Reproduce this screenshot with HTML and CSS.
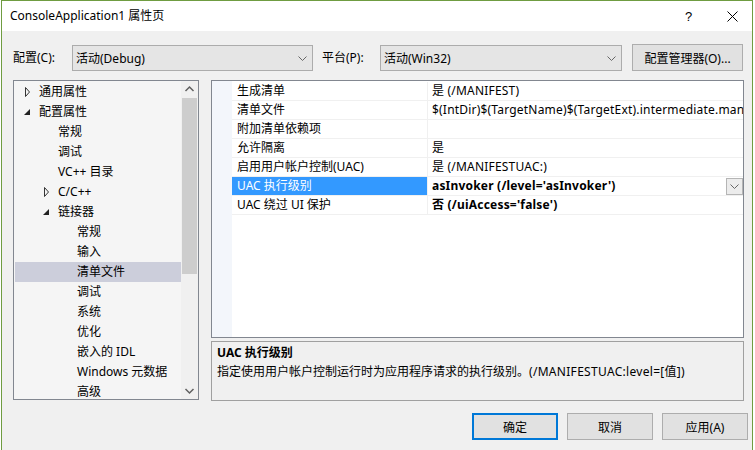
FILE: index.html
```html
<!DOCTYPE html>
<html lang="zh-CN">
<head>
<meta charset="utf-8">
<title>ConsoleApplication1 属性页</title>
<link rel="stylesheet" href="styles.css">
</head>
<body>
<div class="window">
  <div class="titlebar">
    <span class="title">ConsoleApplication1 属性页</span>
    <span class="help">?</span>
    <svg class="close" width="11" height="11" viewBox="0 0 11 11"><path d="M0.5 0.5 L10.5 10.5 M10.5 0.5 L0.5 10.5" stroke="#000" stroke-width="1" fill="none"/></svg>
  </div>
  <div class="content">
    <div class="config-row">
      <span class="lbl lbl-config">配置(C):</span>
      <div class="combo combo-config"><span class="combo-text">活动(Debug)</span><svg class="chev" width="9" height="5" viewBox="0 0 9 5"><path d="M0.5 0.5 L4.5 4.5 L8.5 0.5" stroke="#666" fill="none"/></svg></div>
      <span class="lbl lbl-platform">平台(P):</span>
      <div class="combo combo-platform"><span class="combo-text">活动(Win32)</span><svg class="chev" width="9" height="5" viewBox="0 0 9 5"><path d="M0.5 0.5 L4.5 4.5 L8.5 0.5" stroke="#666" fill="none"/></svg></div>
      <button class="btn btn-mgr">配置管理器(O)...</button>
    </div>
    <div class="main">
      <div class="tree">
        <ul class="tree-list">
          <li class="node l0"><span class="tw"><svg width="16" height="20" viewBox="0 0 16 20"><path d="M2.5 5.5 L6.5 10 L2.5 14.5 Z" stroke="#333" fill="none"/></svg></span>通用属性</li>
          <li class="node l0"><span class="tw"><svg width="16" height="20" viewBox="0 0 16 20"><path d="M7 7 L7 13 L1 13 Z" fill="#222"/></svg></span>配置属性</li>
          <li class="node l1"><span class="tw"></span>常规</li>
          <li class="node l1"><span class="tw"></span>调试</li>
          <li class="node l1"><span class="tw"></span>VC++ 目录</li>
          <li class="node l1"><span class="tw"><svg width="16" height="20" viewBox="0 0 16 20"><path d="M2.5 5.5 L6.5 10 L2.5 14.5 Z" stroke="#333" fill="none"/></svg></span>C/C++</li>
          <li class="node l1"><span class="tw"><svg width="16" height="20" viewBox="0 0 16 20"><path d="M7 7 L7 13 L1 13 Z" fill="#222"/></svg></span>链接器</li>
          <li class="node l2"><span class="tw"></span>常规</li>
          <li class="node l2"><span class="tw"></span>输入</li>
          <li class="node l2 selected"><span class="tw"></span>清单文件</li>
          <li class="node l2"><span class="tw"></span>调试</li>
          <li class="node l2"><span class="tw"></span>系统</li>
          <li class="node l2"><span class="tw"></span>优化</li>
          <li class="node l2"><span class="tw"></span>嵌入的 IDL</li>
          <li class="node l2"><span class="tw"></span>Windows 元数据</li>
          <li class="node l2"><span class="tw"></span>高级</li>
        </ul>
        <div class="vscroll">
          <div class="sb-btn"><svg width="17" height="17" viewBox="0 0 17 17"><path d="M4.5 10 L8.5 6 L12.5 10" stroke="#606060" stroke-width="1.5" fill="none"/></svg></div>
          <div class="sb-track"><div class="sb-thumb"></div></div>
          <div class="sb-btn"><svg width="17" height="17" viewBox="0 0 17 17"><path d="M4.5 7 L8.5 11 L12.5 7" stroke="#606060" stroke-width="1.5" fill="none"/></svg></div>
        </div>
      </div>
      <div class="right">
        <div class="grid">
          <div class="prow"><div class="pmargin"></div><div class="pname">生成清单</div><div class="pval">是 (/MANIFEST)</div></div>
          <div class="prow"><div class="pmargin"></div><div class="pname">清单文件</div><div class="pval">$(IntDir)$(TargetName)$(TargetExt).intermediate.manifest</div></div>
          <div class="prow"><div class="pmargin"></div><div class="pname">附加清单依赖项</div><div class="pval"></div></div>
          <div class="prow"><div class="pmargin"></div><div class="pname">允许隔离</div><div class="pval">是</div></div>
          <div class="prow"><div class="pmargin"></div><div class="pname">启用用户帐户控制(UAC)</div><div class="pval">是 (/MANIFESTUAC:)</div></div>
          <div class="prow active"><div class="pmargin"></div><div class="pname">UAC 执行级别</div><div class="pval bold"><span class="pval-text">asInvoker (/level='asInvoker')</span><span class="dd"><svg width="9" height="5" viewBox="0 0 9 5"><path d="M0.5 0.5 L4.5 4.5 L8.5 0.5" stroke="#666" fill="none"/></svg></span></div></div>
          <div class="prow"><div class="pmargin"></div><div class="pname">UAC 绕过 UI 保护</div><div class="pval bold">否 (/uiAccess='false')</div></div>
        </div>
        <div class="desc">
          <div class="desc-title">UAC 执行级别</div>
          <div class="desc-text">指定使用用户帐户控制运行时为应用程序请求的执行级别。<span class="latin">(/MANIFESTUAC:level=[值])</span></div>
        </div>
      </div>
    </div>
    <div class="footer">
      <button class="btn btn-dlg btn-default">确定</button>
      <button class="btn btn-dlg">取消</button>
      <button class="btn btn-dlg">应用(A)</button>
    </div>
  </div>
</div>
</body>
</html>
```

FILE: styles.css
```css
html, body {
  margin: 0;
  padding: 0;
  background: #ffffff;
}
body {
  width: 755px;
  height: 450px;
  overflow: hidden;
}
.window {
  margin-left: 1px;
  width: 750px;
  height: 449px;
  border: 1px solid #6f9c41;
  border-bottom: none;
  background: #f0f0f0;
  font-family: "Noto Sans", "Noto Sans CJK SC", sans-serif;
  font-size: 12px;
  color: #000;
  overflow: hidden;
}
.titlebar {
  height: 30px;
  background: #fff;
  display: flex;
  align-items: center;
  padding-left: 8px;
}
.title {
  line-height: 16px;
}
.help {
  margin-left: auto;
  font-family: "Liberation Sans", sans-serif;
  font-size: 13px;
  width: 8px;
  margin-right: 34px;
}
.close {
  margin-right: 14px;
  display: block;
}
.content {
  padding: 13px 8px 0 11px;
}
.config-row {
  display: flex;
  align-items: flex-end;
  height: 27px;
}
.lbl {
  align-self: center;
  line-height: 16px;
  padding-top: 1px;
}
.lbl-config {
  width: 59px;
}
.lbl-platform {
  width: 58px;
  margin-left: 9px;
}
.combo {
  box-sizing: border-box;
  height: 26px;
  border: 1px solid #acacac;
  background: #e5e5e5;
  display: flex;
  align-items: center;
  padding-left: 3px;
  padding-right: 5px;
}
.combo-config {
  width: 241px;
}
.combo-platform {
  width: 242px;
}
.combo-text {
  flex: 1;
}
.chev {
  display: block;
}
.btn {
  box-sizing: border-box;
  font: inherit;
  color: #000;
  background: #e1e1e1;
  border: 1px solid #adadad;
  padding: 0;
  margin: 0;
}
.btn-mgr {
  width: 111px;
  height: 27px;
  margin-left: 10px;
}
.main {
  display: flex;
  align-items: flex-start;
  gap: 12px;
  margin-top: 9px;
}
.tree {
  box-sizing: border-box;
  width: 186px;
  height: 320px;
  border: 1px solid #828790;
  background: #f5f5f5;
  display: flex;
  overflow: hidden;
}
.tree-list {
  list-style: none;
  margin: 0;
  padding: 1px 0 0 1px;
  width: 166px;
  height: 317px;
  overflow: hidden;
}
.node {
  display: flex;
  height: 20px;
  line-height: 20px;
  white-space: nowrap;
}
.node.l0 { padding-left: 8px; }
.node.l1 { padding-left: 27px; }
.node.l2 { padding-left: 46px; }
.node.selected {
  background: #cccedb;
}
.tw {
  width: 16px;
  height: 20px;
  flex: none;
}
.tw svg {
  display: block;
}
.vscroll {
  width: 17px;
  height: 318px;
  background: #f0f0f0;
  display: flex;
  flex-direction: column;
}
.sb-btn {
  height: 17px;
  flex: none;
}
.sb-btn svg {
  display: block;
}
.sb-track {
  flex: 1;
  display: flex;
  justify-content: center;
}
.sb-thumb {
  width: 15px;
  height: 176px;
  background: #cdcdcd;
}
.right {
  width: 533px;
  display: flex;
  flex-direction: column;
}
.grid {
  box-sizing: border-box;
  height: 258px;
  border: 1px solid #828790;
  background: linear-gradient(to right, #f3f6fb 20px, #ffffff 20px);
  padding-top: 1px;
}
.prow {
  display: flex;
  height: 19px;
}
.pmargin {
  width: 20px;
  flex: none;
}
.pname {
  box-sizing: border-box;
  width: 196px;
  flex: none;
  border-bottom: 1px solid #f0f0f0;
  border-right: 1px solid #f0f0f0;
  padding-left: 5px;
  line-height: 18px;
  white-space: nowrap;
  overflow: hidden;
}
.pval {
  box-sizing: border-box;
  flex: 1;
  min-width: 0;
  border-bottom: 1px solid #f0f0f0;
  padding-left: 4px;
  line-height: 18px;
  white-space: nowrap;
  overflow: hidden;
  display: flex;
  align-items: center;
  letter-spacing: 0.2px;
}
.pval.bold {
  font-weight: bold;
}
.pval-text {
  flex: 1;
}
.prow.active .pname {
  background: #3399ff;
  color: #fff;
}
.dd {
  box-sizing: border-box;
  width: 17px;
  height: 17px;
  border: 1px solid #b5b5b5;
  background: #ececec;
  display: flex;
  align-items: center;
  justify-content: center;
  flex: none;
}
.dd svg {
  display: block;
}
.desc {
  box-sizing: border-box;
  height: 60px;
  margin-top: 3px;
  border: 1px solid #a0a0a0;
  background: #f0f0f0;
  padding: 1px 5px 0 5px;
  line-height: 19px;
}
.desc-title {
  font-weight: bold;
}
.latin {
  letter-spacing: 0.3px;
}
.footer {
  display: flex;
  justify-content: flex-end;
  gap: 9px;
  margin-top: 12px;
  margin-right: -4px;
}
.btn-dlg {
  width: 86px;
  height: 27px;
}
.btn-default {
  border: 2px solid #0078d7;
}
```
